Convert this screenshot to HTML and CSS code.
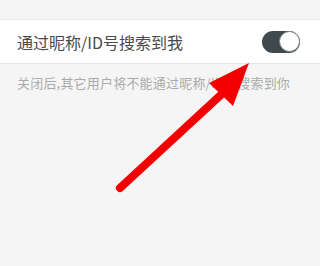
FILE: index.html
```html
<!DOCTYPE html>
<html lang="zh-CN">
<head>
    <meta charset="UTF-8">
    <meta name="viewport" content="width=device-width, initial-scale=1.0">
    <title>隐私设置</title>
    <link rel="stylesheet" href="styles.css">
</head>
<body>

    <div class="top-gap"></div>

    <div class="setting-row">
        <span class="setting-label">通过昵称/ID号搜索到我</span>
        <div class="switch on">
            <div class="knob"></div>
        </div>
    </div>

    <p class="setting-hint">关闭后,其它用户将不能通过昵称/ID号搜索到你</p>

    <!-- red arrow drawn over the page -->
    <svg class="arrow" width="320" height="266" viewBox="0 0 320 266">
        <line x1="120" y1="188" x2="224" y2="92" stroke="#f40000" stroke-width="8" stroke-linecap="round"/>
        <polygon points="249,63 209,83 233,106" fill="#f40000"/>
    </svg>

</body>
</html>
```

FILE: styles.css
```css
body {
    margin: 0;
    background-color: #f5f5f5;
    font-family: "Noto Sans CJK SC", "Noto Sans", sans-serif;
    position: relative;
    height: 266px;
    overflow: hidden;
}

.top-gap {
    height: 19px;
    border-bottom: 1px solid #e9e9e9;
}

.setting-row {
    display: flex;
    justify-content: space-between;
    align-items: center;
    height: 43px;
    padding: 0 20px 0 17px;
    background-color: #fff;
    border-bottom: 1px solid #e6e6e6;
}

.setting-label {
    font-size: 16px;
    color: #4a4a4a;
}

.switch {
    width: 38px;
    height: 22px;
    border-radius: 11px;
    background-color: #ccc;
    display: flex;
    align-items: center;
    box-sizing: border-box;
}

.switch.on {
    background-color: #3e4a4d;
    justify-content: flex-end;
}

.knob {
    width: 21px;
    height: 21px;
    border-radius: 50%;
    background-color: #fff;
    border: 1.5px solid #7d8587;
    box-sizing: border-box;
}

.setting-hint {
    margin: 0;
    padding: 10px 17px;
    font-size: 13px;
    line-height: 18px;
    letter-spacing: 0.2px;
    color: #aaa;
}

.arrow {
    position: absolute;
    top: 0;
    left: 0;
}
```
